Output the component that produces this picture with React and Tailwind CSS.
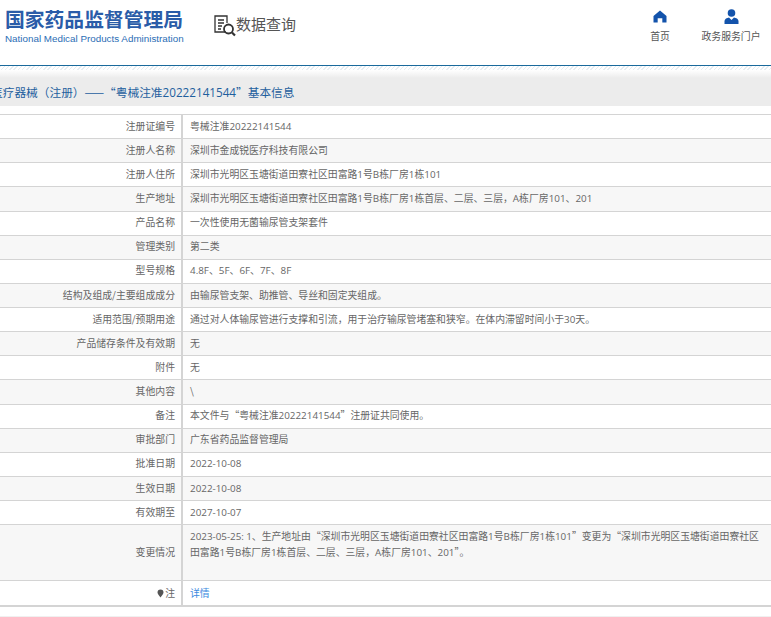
import React from 'react';

const rows = [
  ['注册证编号', '粤械注准20222141544'],
  ['注册人名称', '深圳市金成锐医疗科技有限公司'],
  ['注册人住所', '深圳市光明区玉塘街道田寮社区田富路1号B栋厂房1栋101'],
  ['生产地址', '深圳市光明区玉塘街道田寮社区田富路1号B栋厂房1栋首层、二层、三层，A栋厂房101、201'],
  ['产品名称', '一次性使用无菌输尿管支架套件'],
  ['管理类别', '第二类'],
  ['型号规格', '4.8F、5F、6F、7F、8F'],
  ['结构及组成/主要组成成分', '由输尿管支架、助推管、导丝和固定夹组成。'],
  ['适用范围/预期用途', '通过对人体输尿管进行支撑和引流，用于治疗输尿管堵塞和狭窄。在体内滞留时间小于30天。'],
  ['产品储存条件及有效期', '无'],
  ['附件', '无'],
  ['其他内容', '\\'],
  ['备注', '本文件与“粤械注准20222141544”注册证共同使用。'],
  ['审批部门', '广东省药品监督管理局'],
  ['批准日期', '2022-10-08'],
  ['生效日期', '2022-10-08'],
  ['有效期至', '2027-10-07'],
];

const font = "font-['Noto_Sans_CJK_SC','Liberation_Sans',sans-serif]";

// digits and latin sit in a wider face than the CJK font's own
const Mixed = ({ text }) =>
  text.split(/([A-Za-z0-9.:-]+)/).map((part, i) =>
    i % 2 === 1 ? (
      <span key={i} className="font-['Open_Sans',sans-serif]">{part}</span>
    ) : (
      part
    )
  );

const Row = ({ label, striped, height, top, children }) => (
  <div className={`flex border-b border-[#d4d4d4] ${height} ${striped ? 'bg-[#f7f7f7]' : 'bg-white'}`}>
    <div className="w-[183px] shrink-0 flex items-center justify-end pr-[6px] pb-[1px] border-r-2 border-[#d4d4d4] text-[#666]">{label}</div>
    <div className={`flex-1 flex pl-[7px] pr-[6px] text-[#666] ${top ? 'items-start pt-[3px]' : 'items-center pb-[1px]'}`}>{children}</div>
  </div>
);

export default function App() {
  return (
    <div className={`w-[771px] h-[617px] overflow-hidden bg-white text-[9.86px] ${font}`}>
      <div className="h-[66px] flex border-b border-[#1a6a9c]">
        <div className="w-[205px] pl-[5px] pt-[7px]">
          <div className="text-[19.8px] leading-[24px] font-bold text-[#2a5ca8] whitespace-nowrap">国家药品监督管理局</div>
          <div className="mt-[2px] text-[9.84px] leading-[12px] text-[#2a6db5] font-['Liberation_Sans',sans-serif] whitespace-nowrap">National Medical Products Administration</div>
        </div>
        <div className="flex items-start pt-[14px] pl-[8px]">
          <svg width="24" height="24" viewBox="0 0 24 24" fill="none" stroke="#333" strokeWidth="1.3">
            <path d="M13 18H2V2h12v7" />
            <path d="M5 6h6M5 9h6M5 12h4M5 15h3" />
            <circle cx="15.5" cy="15" r="4.5" strokeWidth="1.8" />
            <path d="M19 18.5l3 3" strokeWidth="2.2" />
          </svg>
          <span className="text-[15px] leading-[22px] text-[#555] -ml-[1px] -mt-[1px]">数据查询</span>
        </div>
        <div className="ml-auto flex text-[#555] pt-[10px]">
          <div className="w-[40px] flex flex-col items-center mr-[20px]">
            <svg width="14" height="13" viewBox="0 0 15 14" fill="#1353ab">
              <path d="M7.5 0.5L14.5 6.5V13.5H10V9H5V13.5H0.5V6.5Z" />
            </svg>
            <span className="mt-[6px] leading-[14px]">首页</span>
          </div>
          <div className="w-[62px] flex flex-col items-center mr-[9px] -mt-[1px]">
            <svg width="15" height="16" viewBox="0 0 15 16" fill="#1353ab">
              <circle cx="7.5" cy="4" r="3.8" />
              <path d="M0.5 15V12C0.5 10 3 8.8 5 8.5L7.5 11L10 8.5C12 8.8 14.5 10 14.5 12V15Z" />
            </svg>
            <span className="mt-[4px] leading-[14px] whitespace-nowrap">政务服务门户</span>
          </div>
        </div>
      </div>
      <div className="h-[4px] bg-[repeating-linear-gradient(135deg,#e6edf2_0,#e6edf2_1px,#ffffff_1px,#ffffff_3px)]" />
      <div className="h-[8px] bg-gradient-to-b from-white to-[#ececec]" />
      <div className="h-[28px] bg-[#ececec] flex items-center whitespace-nowrap text-[11.7px] text-[#1f5f9e]">
        <span className="-ml-[9px]"><Mixed text="医疗器械（注册）——“粤械注准20222141544”基本信息" /></span>
      </div>
      <div className="h-[8px]" />
      <div className="border-t border-[#d4d4d4]">
        {rows.map(([label, value], i) => (
          <Row key={label} label={label} striped={i % 2 === 1} height="h-[24.125px]">
            <span className="whitespace-nowrap"><Mixed text={value} /></span>
          </Row>
        ))}
        <Row label="变更情况" striped top height="h-[56px]">
          <div className="leading-[16px] whitespace-nowrap">
            <div><Mixed text="2023-05-25: 1、生产地址由“深圳市光明区玉塘街道田寮社区田富路1号B栋厂房1栋101”变更为“深圳市光明区玉塘街道田寮社区" /></div>
            <div><Mixed text="田富路1号B栋厂房1栋首层、二层、三层，A栋厂房101、201”。" /></div>
          </div>
        </Row>
        <div className="flex h-[26px] border-b-2 border-[#d4d4d4]">
          <div className="w-[183px] shrink-0 flex items-center justify-end pr-[6px] border-r-2 border-[#d4d4d4] text-[#666]">
            <svg width="7" height="9" viewBox="0 0 7 9" fill="#555" className="mr-[1px]">
              <path d="M3.5 0.5A3 3 0 0 1 6.5 3.5C6.5 5 5 6 3.5 8.5C2 6 0.5 5 0.5 3.5A3 3 0 0 1 3.5 0.5Z" />
            </svg>
            注
          </div>
          <div className="flex-1 flex items-center pl-[7px] text-[#3b8ae0]">详情</div>
        </div>
      </div>
      <div className="h-[9px]" />
      <div className="h-[2px] bg-[#f0f0f0]" />
    </div>
  );
}
